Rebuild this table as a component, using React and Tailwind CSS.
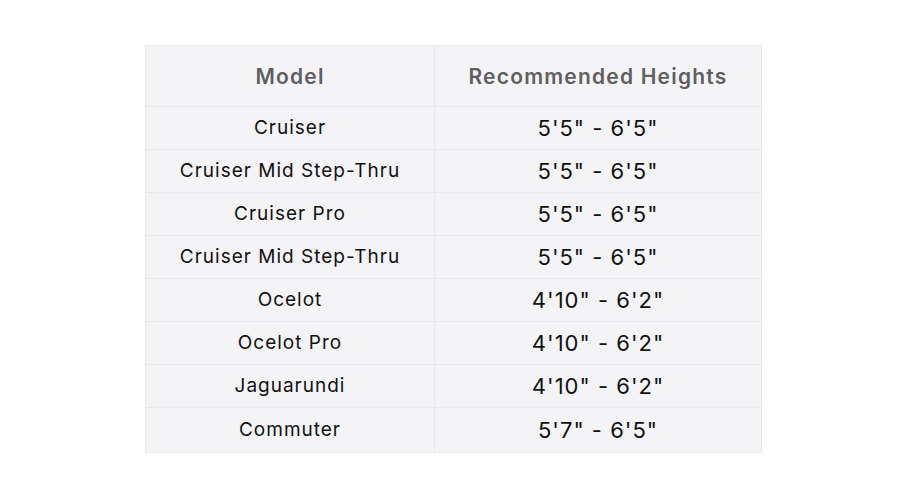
import React from 'react';

const rows = [
  ['Cruiser', `5'5" - 6'5"`],
  ['Cruiser Mid Step-Thru', `5'5" - 6'5"`],
  ['Cruiser Pro', `5'5" - 6'5"`],
  ['Cruiser Mid Step-Thru', `5'5" - 6'5"`],
  ['Ocelot', `4'10" - 6'2"`],
  ['Ocelot Pro', `4'10" - 6'2"`],
  ['Jaguarundi', `4'10" - 6'2"`],
  ['Commuter', `5'7" - 6'5"`],
];

export default function App() {
  return (
    <div className="w-[900px] h-[497px] bg-white pt-[45px] pl-[145px]" style={{ fontFamily: '"Inter", "Noto Sans", sans-serif' }}>
      <div className="w-[617px] bg-[#f4f4f6] border border-[#e9e9ec]">
        <div className="flex h-[60px] text-[#5f5f62] font-semibold text-[21px] tracking-[1.2px]">
          <div className="w-[289px] flex items-center justify-center border-r border-[#e9e9ec] pt-[1px]">Model</div>
          <div className="flex-1 flex items-center justify-center pt-[1px]">Recommended Heights</div>
        </div>
        {rows.map(([m, h], i) => (
          <div key={i} className={`flex border-t border-[#e9e9ec] ${i === 7 ? 'h-[45px]' : 'h-[43px]'}`}>
            <div className="w-[289px] flex items-center justify-center border-r border-[#e9e9ec] text-[19px] tracking-[1px] text-[#111]">{m}</div>
            <div className="flex-1 flex items-center justify-center text-[22px] tracking-[1px] text-[#111] pt-[1px]">{h}</div>
          </div>
        ))}
      </div>
    </div>
  );
}
